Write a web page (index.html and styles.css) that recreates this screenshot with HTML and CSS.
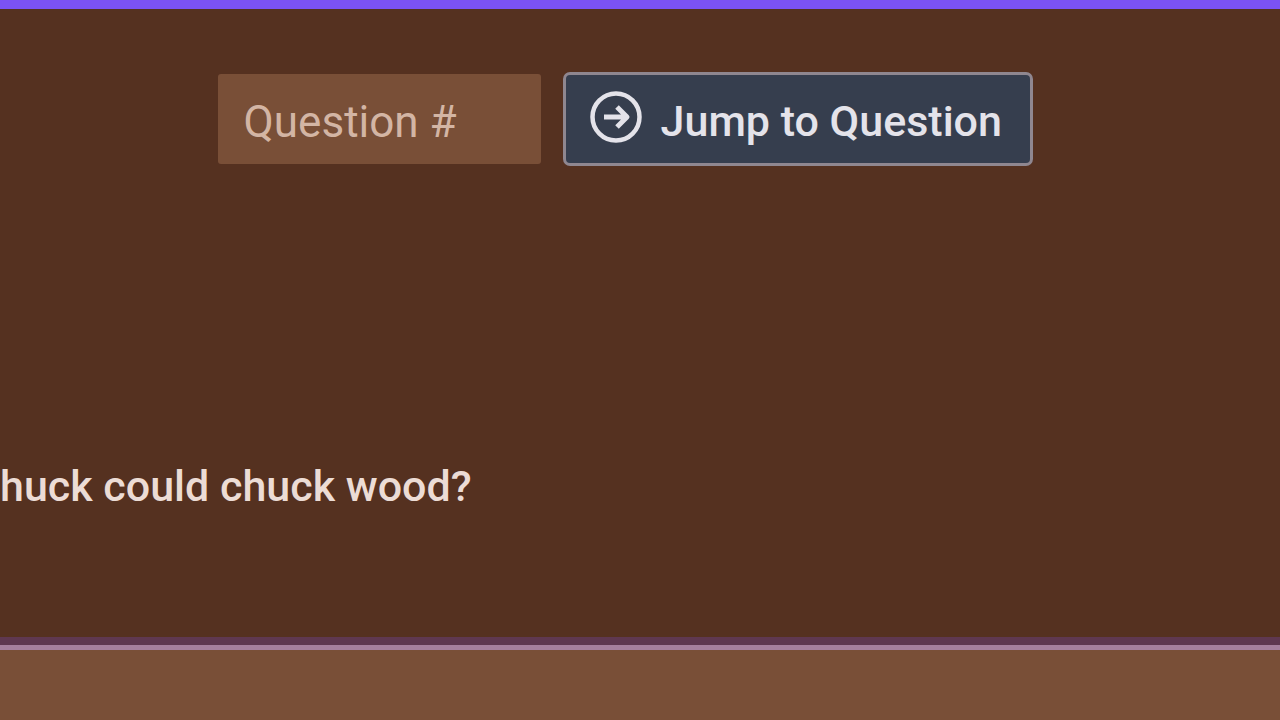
FILE: index.html
```html
<!DOCTYPE html>
<html lang="en">
<head>
    <meta charset="UTF-8">
    <meta name="viewport" content="width=device-width, initial-scale=1.0">
    <title>Jump to Question</title>
    <link rel="stylesheet" href="styles.css">
</head>
<body>
    <main class="question-panel">
        <form class="jump-form" onsubmit="return false">
            <input class="jump-input" type="text" inputmode="numeric" placeholder="Question #" aria-label="Question #">
            <button class="jump-btn" type="submit">
                <svg class="jump-icon" viewBox="0 0 52 52" fill="none" stroke="currentColor" aria-hidden="true">
                    <circle cx="26" cy="26" r="23.5" stroke-width="4.5"/>
                    <path d="M14 26H36M27 16L37 26L27 36" stroke-width="5" stroke-linejoin="round"/>
                </svg>
                <span>Jump to Question</span>
            </button>
        </form>
        <p class="question-text">huck could chuck wood?</p>
    </main>
    <section class="answer-panel"></section>
</body>
</html>
```

FILE: styles.css
```css
* {
    box-sizing: border-box;
}
body {
    margin: 0;
    min-height: 100vh;
    display: flex;
    flex-direction: column;
    background: #553120;
    font-family: 'Roboto', sans-serif;
    font-size: 43px;
    line-height: 56px;
    color: #ecdcd5;
}
.question-panel {
    border-top: 9px solid #7b52f4;
    border-bottom: 8px solid #5f3850;
    padding: 63px 0 123px;
}
.jump-form {
    display: flex;
    align-items: center;
    gap: 22px;
    padding-left: 17%;
}
.jump-input {
    width: 323px;
    height: 90px;
    padding: 5px 26px 0;
    border: none;
    border-radius: 3px;
    background: #794f37;
    color: #ecdcd5;
    font: inherit;
    font-size: 44px;
}
.jump-input::placeholder {
    color: #d3b5a4;
    opacity: 1;
}
.jump-btn {
    display: flex;
    align-items: center;
    gap: 19px;
    height: 94px;
    padding: 0 28px 4px 24px;
    border: 3px solid #8f8790;
    border-radius: 7px;
    background: #363e4e;
    color: #e4e3ea;
    font: inherit;
    font-weight: 500;
    cursor: pointer;
}
.jump-btn span {
    padding-top: 7px;
}
.jump-icon {
    width: 52px;
    height: 52px;
}
.question-text {
    margin: 292px 0 0;
    font-weight: 500;
}
.answer-panel {
    flex: 1;
    border-top: 5px solid #a6809d;
    background: #794f37;
}
```
